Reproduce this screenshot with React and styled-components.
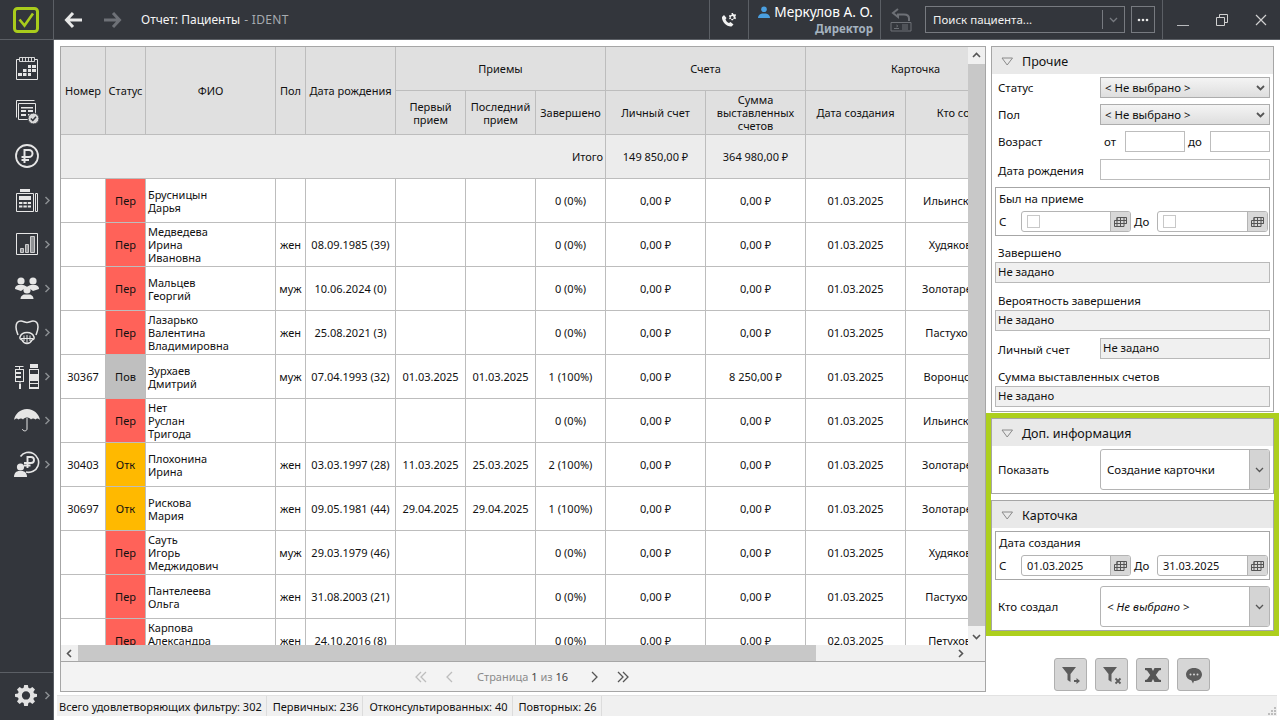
import React from 'react';
import styled, { createGlobalStyle } from 'styled-components';

const Global = createGlobalStyle`
  html, body { margin: 0; padding: 0; background: #fff; }
  body { font-family: "Noto Sans", "Open Sans", "DejaVu Sans", sans-serif; font-size: 11.5px; color: #111; }
  * { box-sizing: border-box; }
`;

const Page = styled.div`
  width: 1280px;
  height: 720px;
  overflow: hidden;
  display: flex;
  flex-direction: column;
  background: #fff;
`;

/* top bar */
const TopBar = styled.header`
  height: 40px;
  flex: none;
  display: flex;
  align-items: stretch;
  background: #33363c;
  border-bottom: 1px solid #5b5f65;
  color: #fff;
`;
const LogoCell = styled.div`
  width: 54px;
  flex: none;
  display: flex;
  align-items: center;
  justify-content: center;
  border-right: 1px solid #5b5f65;
  padding-right: 1px;
`;
const NavArrows = styled.div`
  display: flex;
  align-items: center;
  gap: 22px;
  padding-left: 10px;
`;
const Title = styled.div`
  margin-left: 19px;
  font-size: 12px;
  align-self: center;
  white-space: nowrap;
  color: #f4f4f4;
  span { color: #a7abb0; letter-spacing: .3px; margin-left: 1px; }
`;
const TopRight = styled.div`
  margin-left: auto;
  display: flex;
  align-items: stretch;
`;
const TopCell = styled.div`
  display: flex;
  align-items: center;
  justify-content: center;
  width: ${p => p.$w}px;
  border-left: ${p => (p.$line ? '1px solid #5b5f65' : 'none')};
`;
const UserCell = styled.div`
  width: 133px;
  border-left: 1px solid #5b5f65;
  border-right: 1px solid #5b5f65;
  display: flex;
  flex-direction: column;
  align-items: flex-end;
  padding: 2px 7px 0 0;
`;
const UserName = styled.div`
  display: flex;
  align-items: center;
  gap: 4px;
  font-size: 13.7px;
  line-height: 19px;
  white-space: nowrap;
`;
const UserRole = styled.div`
  font-size: 11.5px;
  font-weight: 700;
  line-height: 15px;
  color: #a4b2bf;
`;
const SearchBox = styled.div`
  width: 200px;
  height: 27px;
  align-self: center;
  margin-left: 4px;
  border: 1px solid #777a80;
  display: flex;
  align-items: center;
  font-size: 11.5px;
  padding-left: 7px;
  color: #f1f1f1;
`;
const SearchText = styled.span`
  flex: 1;
`;
const SearchArrow = styled.span`
  width: 22px;
  height: 19px;
  border-left: 1px solid #777a80;
  display: flex;
  align-items: center;
  justify-content: center;
`;
const MoreButton = styled.div`
  width: 24px;
  height: 27px;
  align-self: center;
  margin: 0 7px 0 6px;
  border: 1px solid #777a80;
  display: flex;
  align-items: center;
  justify-content: center;
`;
const WindowButtons = styled.div`
  width: 118px;
  border-left: 1px solid #5b5f65;
  display: flex;
  align-items: center;
  justify-content: space-between;
  padding: 0 13px 0 14px;
`;

/* body */
const Body = styled.div`
  flex: 1;
  display: flex;
  min-height: 0;
`;
const Sidebar = styled.nav`
  width: 54px;
  flex: none;
  background: #33363c;
  border-right: 1px solid #5b5f65;
  display: flex;
  flex-direction: column;
  padding-top: 6px;
`;
const SideItem = styled.div`
  height: 44px;
  flex: none;
  display: flex;
  align-items: center;
  position: relative;
  padding-left: 14px;
`;
const SideChevron = styled.svg`
  position: absolute;
  left: 44px;
  top: 18px;
`;
const SideFoot = styled.div`
  margin-top: auto;
  border-top: 1px solid #5b5f65;
  height: 48px;
  display: flex;
  align-items: center;
  position: relative;
  padding: 0 0 3px 15px;
`;
const Content = styled.main`
  flex: 1;
  min-width: 0;
  display: flex;
  flex-direction: column;
`;
const Workspace = styled.div`
  height: 652px;
  flex: none;
  display: flex;
  padding: 6px 0 0 6px;
`;

/* table panel */
const TablePanel = styled.section`
  width: 926px;
  height: 646px;
  flex: none;
  border: 1px solid #a6a6a6;
  display: flex;
  flex-direction: column;
  background: #fff;
`;
const TableArea = styled.div`
  height: 598px;
  flex: none;
  display: flex;
`;
const Viewport = styled.div`
  width: 907px;
  flex: none;
  overflow: hidden;
`;
const Grid = styled.table`
  table-layout: fixed;
  width: 965px;
  border-collapse: separate;
  border-spacing: 0;
  font-size: 11px;
  line-height: 13px;
`;
const Col = styled.col`
  width: ${p => p.$w}px;
`;
const Th = styled.th`
  height: 44px;
  background: #e0e0e0;
  font-weight: 400;
  text-align: center;
  padding: 0 2px;
  border-right: 1px solid #bdbdbd;
  border-bottom: 1px solid #bdbdbd;
  overflow: hidden;
  white-space: ${p => (p.$wrap ? 'normal' : 'nowrap')};
`;
const TotalCell = styled.td`
  height: 44px;
  background: #ececec;
  text-align: ${p => (p.$right ? 'right' : 'center')};
  padding: 0 2px;
  border-right: 1px solid #bdbdbd;
  border-bottom: 1px solid #bdbdbd;
`;
const Td = styled.td`
  height: 44px;
  padding: 0 2px;
  text-align: center;
  white-space: nowrap;
  overflow: hidden;
  border-right: 1px solid #bdbdbd;
  border-bottom: 1px solid #bdbdbd;
`;
const StatusTd = styled(Td)`
  background: ${p => p.$color};
`;
const NameTd = styled(Td)`
  text-align: left;
  white-space: pre-line;
`;
const VScroll = styled.div`
  width: 17px;
  flex: none;
  background: #f0f0f0;
  display: flex;
  flex-direction: column;
  align-items: center;
`;
const VArrow = styled.div`
  height: 17px;
  flex: none;
  display: flex;
  align-items: center;
  justify-content: center;
`;
const VTrack = styled.div`
  flex: 1;
  width: 17px;
`;
const VThumb = styled.div`
  height: 562px;
  background: #c8c8c8;
`;
const HScroll = styled.div`
  height: 16px;
  flex: none;
  background: #f0f0f0;
  display: flex;
  align-items: center;
  padding-right: 16px;
`;
const HArrow = styled.div`
  width: 17px;
  height: 16px;
  flex: none;
  display: flex;
  align-items: center;
  justify-content: center;
`;
const HTrack = styled.div`
  flex: 1;
  height: 16px;
`;
const HThumb = styled.div`
  width: 738px;
  height: 16px;
  background: #c8c8c8;
`;
const Pager = styled.div`
  flex: 1;
  border-top: 1px solid #a6a6a6;
  background: #f3f3f3;
  display: flex;
  align-items: center;
  padding-left: 353px;
`;
const PagerIcon = styled.svg`
  flex: none;
  margin-left: ${p => p.$ml || 0}px;
`;
const PagerText = styled.div`
  margin-left: 23px;
  font-size: 11px;
  color: #8b8b8b;
  white-space: nowrap;
  b { font-weight: 400; color: #444; }
`;

/* filter panel */
const FilterColumn = styled.aside`
  width: 293px;
  flex: none;
  display: flex;
  flex-direction: column;
`;
const SectionFrame = styled.div`
  margin: ${p => p.$m || '0'};
  width: 283px;
  height: ${p => p.$h}px;
  flex: none;
  border: 1px solid #a6a6a6;
  background: #fff;
`;
const SectionHead = styled.div`
  height: 27px;
  background: #e9e9e9;
  display: flex;
  align-items: center;
  gap: 8px;
  padding: 1px 0 0 9px;
  font-size: 12.5px;
`;
const Highlight = styled.div`
  border: 5px solid #adcf1d;
  width: 293px;
  height: 223px;
  flex: none;
  margin-top: 1px;
  display: flex;
  flex-direction: column;
  gap: 6px;
`;
const SectionBody = styled.div`
  padding: 3px 3px 0 3px;
  display: flex;
  flex-direction: column;
`;
const FieldRow = styled.div`
  height: ${p => p.$h || 21}px;
  margin-top: ${p => p.$mt || 0}px;
  display: flex;
  align-items: center;
  flex: none;
`;
const Label = styled.div`
  width: 105px;
  flex: none;
  padding: ${p => p.$pt || 0}px 0 0 3px;
  font-size: 11.5px;
  white-space: nowrap;
`;
const Small = styled.span`
  font-size: 11.5px;
  padding-left: ${p => p.$pl}px;
  width: 25px;
  flex: none;
`;
const NativeSelect = styled.div`
  flex: 1;
  height: 21px;
  border: 1px solid #adadad;
  background: linear-gradient(#f4f4f4, #dedede);
  display: flex;
  align-items: center;
  justify-content: space-between;
  padding: 0 4px;
  font-size: 11.4px;
`;
const Input = styled.div`
  width: ${p => (p.$w ? `${p.$w}px` : 'auto')};
  flex: ${p => (p.$w ? 'none' : '1')};
  height: 21px;
  border: 1px solid #bdbdbd;
  background: #fff;
`;
const DateBox = styled.div`
  border: 1px solid #a6a6a6;
  height: 49px;
  flex: none;
  margin-top: ${p => p.$mt || 0}px;
  padding: 2px 1px 0 3px;
`;
const DateTitle = styled.div`
  height: 21px;
  line-height: 18px;
  font-size: 11.5px;
`;
const DateRow = styled.div`
  display: flex;
  align-items: center;
  height: 21px;
`;
const DatePrefix = styled.span`
  width: 22px;
  flex: none;
  font-size: 11.5px;
`;
const DateTo = styled.span`
  width: 26px;
  flex: none;
  padding-left: 3px;
  font-size: 11.5px;
`;
const DateField = styled.div`
  width: ${p => p.$w}px;
  flex: none;
  height: 21px;
  border: 1px solid #b4b4b4;
  border-radius: 3px;
  display: flex;
  align-items: center;
  overflow: hidden;
  font-size: 11px;
`;
const DateValue = styled.div`
  flex: 1;
  padding-left: 5px;
  display: flex;
  align-items: center;
`;
const EmptyCheck = styled.div`
  width: 13px;
  height: 13px;
  border: 1px solid #c8c8c8;
`;
const CalButton = styled.div`
  width: 20px;
  height: 100%;
  flex: none;
  background: #d8d8d8;
  border-left: 1px solid #b4b4b4;
  display: flex;
  align-items: center;
  justify-content: center;
`;
const StackLabel = styled.div`
  height: 18px;
  margin-top: ${p => p.$mt || 0}px;
  padding: 0 0 2px 3px;
  display: flex;
  align-items: center;
  flex: none;
  font-size: 11.5px;
`;
const ReadOnly = styled.div`
  flex: ${p => (p.$grow ? '1' : 'none')};
  height: 21px;
  border: 1px solid #b9b9b9;
  background: #f0f0f0;
  padding-left: 2px;
  font-size: 11.3px;
  line-height: 18px;
`;
const BigSelect = styled.div`
  flex: 1;
  height: 41px;
  border: 1px solid #b4b4b4;
  border-radius: 3px;
  display: flex;
  align-items: center;
  overflow: hidden;
  font-size: 11.5px;
`;
const BigValue = styled.div`
  flex: 1;
  padding-left: 6px;
  font-style: ${p => (p.$it ? 'italic' : 'normal')};
`;
const BigArrow = styled.div`
  width: 20px;
  height: 100%;
  background: #d4d4d4;
  border-left: 1px solid #b4b4b4;
  display: flex;
  align-items: center;
  justify-content: center;
`;
const ActionBar = styled.div`
  display: flex;
  gap: 8px;
  margin: 22px 0 0 68px;
`;
const ActionButton = styled.button`
  width: 33px;
  height: 33px;
  padding: 0;
  background: #d6d6d6;
  border: 1px solid #b0b0b0;
  border-radius: 3px;
  display: flex;
  align-items: center;
  justify-content: center;
  color: #555;
`;

/* status bar */
const StatusBar = styled.footer`
  height: 21px;
  flex: none;
  margin: 3px 3px 0 3px;
  background: #f0f0f0;
  border-top: 1px solid #e2e2e2;
  display: flex;
  align-items: stretch;
  font-size: 11px;
  position: relative;
`;
const StatusItem = styled.div`
  padding: 0 4px 0 ${p => (p.$first ? 2 : 6)}px;
  line-height: 21px;
  border-right: 1px solid #dcdcdc;
  white-space: nowrap;
`;
const Grip = styled.svg`
  position: absolute;
  right: 1px;
  bottom: 1px;
`;

const Chev = ({ d = 'r', c = '#555', s = 1.6, w = 9, h = 9 }) => {
  const paths = {
    r: 'M3 1l3.5 3.5L3 8',
    l: 'M6 1L2.5 4.5 6 8',
    u: 'M1 6l3.5-3.5L8 6',
    d: 'M1 3l3.5 3.5L8 3',
  };
  return (
    <svg width={w} height={h} viewBox="0 0 9 9" fill="none">
      <path d={paths[d]} stroke={c} strokeWidth={s} />
    </svg>
  );
};

const Tri = () => (
  <svg width="13" height="9" viewBox="0 0 13 9" fill="none">
    <path d="M1 1h10.5L6.2 8z" stroke="#8a8a8a" strokeWidth="1" />
  </svg>
);

const Cal = () => (
  <svg width="13" height="10" viewBox="0 0 13 10" fill="none" stroke="#555" strokeWidth="1">
    <path d="M3 .5h9.5v6H10v3H.5v-6H3zM.5 6.5h12M3 .5v9M6.5.5v9M10 .5v6M3 3.5h9.5" />
  </svg>
);

const LogoIcon = () => (
  <svg width="26" height="26" viewBox="0 0 26 26">
    <rect x="1.5" y="1.5" width="23" height="23" rx="3" fill="#33363c" stroke="#a9cc1c" strokeWidth="3" />
    <path d="M6.5 12.5l5 6 8.5-12" fill="none" stroke="#a9cc1c" strokeWidth="2.6" />
  </svg>
);

const icon = { width: 26, height: 26, viewBox: '0 0 26 26' };

const CalendarIcon = () => (
  <svg {...icon} fill="none" stroke="#e6e6e6">
    <path d="M2.5 4.5h21v20h-21z" />
    <path d="M5.500 2.500h15v4h-15zM8.500 2.500v4M11.500 2.500v4M14.500 2.500v4M17.500 2.500v4" strokeWidth=".9" fill="#33363c" />
    <path d="M14 10h3v3h-3zM18 10h4v3h-4zM9 14h3.500v3H9zM14 14h3v3h-3zM18 14h4v3h-4zM4 18h4v3H4zM9 18h3.500v3H9zM14 18h3v3h-3z" fill="#e6e6e6" stroke="none" />
  </svg>
);
const ListCheckIcon = () => (
  <svg {...icon} fill="none" stroke="#e6e6e6">
    <path d="M2.500 1.500h18M2.500 1.500v17M4.500 4.500h17v16h-17z" />
    <path d="M7 8h12v1.600H7zM7 11h5v2H7zM14 11h5v2h-5zM7 15h5v2H7zM14 15h3v2h-3z" fill="#e6e6e6" stroke="none" />
    <circle cx="19.500" cy="19.500" r="5.500" fill="#d8d8d8" stroke="#33363c" />
    <path d="M16.800 19.500l2 2 3.200-3.800" stroke="#33363c" strokeWidth="1.500" />
  </svg>
);
const RubleIcon = () => (
  <svg {...icon} fill="none" stroke="#e6e6e6" strokeWidth="1.800">
    <circle cx="13" cy="13" r="11" />
    <path d="M10.500 20V7h4.500a3.500 3.500 0 0 1 0 7H7.500M7.500 17H15" strokeWidth="2" />
  </svg>
);
const RegisterIcon = () => (
  <svg {...icon} fill="none" stroke="#e6e6e6">
    <path d="M2.500 6.500h17v18h-17zM21.500 6.500h2v18h-2z" />
    <path d="M6 2h10v3H6z" fill="#e6e6e6" stroke="none" />
    <path d="M5 9h12v4H5zM5 15h3.400v2H5zM9.400 15h3.400v2H9.400zM13.800 15H17v2h-3.200zM5 18.500h3.400v2H5zM9.400 18.500h3.400v2H9.400zM13.800 18.500H17v2h-3.200z" fill="#e6e6e6" stroke="none" />
  </svg>
);
const ChartIcon = () => (
  <svg {...icon} fill="none" stroke="#e6e6e6">
    <path d="M2.500 2.500h21v21h-21z" />
    <path d="M6.500 17.500h3v4h-3zM11.500 13.500h3v8h-3zM16.500 5.500h4v16h-4z" fill="#8f9194" stroke="#e6e6e6" strokeWidth=".8" />
  </svg>
);
const PeopleIcon = () => (
  <svg {...icon} fill="#e6e6e6">
    <circle cx="7" cy="6" r="3.600" />
    <path d="M1 14c0-3 2.500-4 4-4h4c1.500 0 3 1 3.500 2L7 16z" />
    <circle cx="19" cy="6" r="3.600" />
    <path d="M25 14c0-3-2.500-4-4-4h-4c-1.500 0-3 1-3.500 2l5.500 4z" />
    <circle cx="13" cy="15" r="3.600" />
    <path d="M6.500 24c0-3 2.500-4.500 4-4.500h5c1.500 0 4 1.500 4 4.500z" />
  </svg>
);
const ToothIcon = () => (
  <svg {...icon} fill="none" stroke="#e6e6e6" strokeWidth="1.500">
    <path d="M7 2c2 0 4 1.500 6 1.500S17 2 19 2c3.500 0 5 3 5 6 0 3-1 5-2 8M7 2C3.500 2 2 5 2 8c0 3 1 5 2 8" />
    <path d="M6 18c1-3 4-4.500 7-4.500s6 1.500 7 4.500c.5 1.500-.5 2.500-2 3-1 2-3 3.500-5 3.500S9 23 8 21c-1.500-.5-2.500-1.500-2-3z" />
    <path d="M7 19.500h12M13 16v8M10 16.500v5.500M16 16.500v5.500" strokeWidth="1" />
  </svg>
);
const MedIcon = () => (
  <svg {...icon} fill="#e6e6e6">
    <path d="M1 3h8.500v1H6v2h4v13H6.500v2H7v5H5v-5h.500v-2H1V6h4V4H1zm1 4v2h5v2H2v2h5v2H2v3h7V7z" />
    <path d="M16 1h8v4h-8zM15 6h10v20H15zm1 1v17h8V7z" />
    <path d="M15 11h10v7H15z" />
    <path d="M16 20h8v1h-8z" />
  </svg>
);
const UmbrellaIcon = () => (
  <svg {...icon}>
    <path d="M13 2C6 2 1 7 0 13c2-2 3-2 4.500-.5C6 11 8 11 9 12.500c1-1.500 3-2 4-2s3 .5 4 2c1-1.500 3-1.500 4.500 0C23 11 24 11 26 13 25 7 20 2 13 2z" fill="#e6e6e6" />
    <path d="M13 11v11c0 2.500-4.500 2.500-4.500 0" fill="none" stroke="#e6e6e6" strokeWidth="1" />
  </svg>
);
const UserRubleIcon = () => (
  <svg {...icon} fill="none" stroke="#e6e6e6">
    <path d="M6.500 5.500A10 10 0 1 1 12 21" strokeWidth="1.600" />
    <path d="M13.500 17V6H17a3 3 0 0 1 0 6h-7M10 14.500h6.500" strokeWidth="1.900" />
    <circle cx="6.500" cy="16" r="3.600" fill="#e6e6e6" stroke="none" />
    <path d="M0 26c0-4 2.500-6 5-6h3c2.500 0 5 2 5 6z" fill="#e6e6e6" stroke="none" />
  </svg>
);
const GearIcon = () => (
  <svg width="22" height="22" viewBox="0 0 24 24" fill="#e2e2e2" fillRule="evenodd">
    <path d="M10 1h4l.600 3.200 1.800.8L19 3.200 21.800 6 20 8.600l.8 1.800L24 11v3l-3.200.6-.8 1.800 1.800 2.600-2.800 2.800-2.600-1.800-1.800.8L14 24h-4l-.6-3.200-1.800-.8L5 21.800 2.200 19 4 16.400l-.8-1.800L0 14v-3l3.200-.6.8-1.800L2.200 6 5 3.200l2.600 1.800 1.800-.8zM12 8a4.500 4.500 0 1 0 0 9 4.500 4.500 0 0 0 0-9z" />
  </svg>
);

const sideIcons = [CalendarIcon, ListCheckIcon, RubleIcon, RegisterIcon, ChartIcon, PeopleIcon, ToothIcon, MedIcon, UmbrellaIcon, UserRubleIcon];
const withChevron = [false, false, false, true, true, true, true, true, true, true];

const STATUS = { p: ['Пер', '#ff6259'], o: ['Отк', '#ffb900'], v: ['Пов', '#bfbfbf'] };

const rows = [
  ['', 'p', 'Брусницын\nДарья', '', '', '', '', '0 (0%)', '0,00 ₽', '0,00 ₽', '01.03.2025', 'Ильинская И. С.'],
  ['', 'p', 'Медведева\nИрина\nИвановна', 'жен', '08.09.1985 (39)', '', '', '0 (0%)', '0,00 ₽', '0,00 ₽', '01.03.2025', 'Худякова Е. С.'],
  ['', 'p', 'Мальцев\nГеоргий', 'муж', '10.06.2024 (0)', '', '', '0 (0%)', '0,00 ₽', '0,00 ₽', '01.03.2025', 'Золотарева Е. А.'],
  ['', 'p', 'Лазарько\nВалентина\nВладимировна', 'жен', '25.08.2021 (3)', '', '', '0 (0%)', '0,00 ₽', '0,00 ₽', '01.03.2025', 'Пастухова А. В.'],
  ['30367', 'v', 'Зурхаев\nДмитрий', 'муж', '07.04.1993 (32)', '01.03.2025', '01.03.2025', '1 (100%)', '0,00 ₽', '8 250,00 ₽', '01.03.2025', 'Воронцова Е. А.'],
  ['', 'p', 'Нет\nРуслан\nТригода', '', '', '', '', '0 (0%)', '0,00 ₽', '0,00 ₽', '01.03.2025', 'Ильинская И. С.'],
  ['30403', 'o', 'Плохонина\nИрина', 'жен', '03.03.1997 (28)', '11.03.2025', '25.03.2025', '2 (100%)', '0,00 ₽', '0,00 ₽', '01.03.2025', 'Золотарева Е. А.'],
  ['30697', 'o', 'Рискова\nМария', 'жен', '09.05.1981 (44)', '29.04.2025', '29.04.2025', '1 (100%)', '0,00 ₽', '0,00 ₽', '01.03.2025', 'Золотарева Е. А.'],
  ['', 'p', 'Сауть\nИгорь\nМеджидович', 'муж', '29.03.1979 (46)', '', '', '0 (0%)', '0,00 ₽', '0,00 ₽', '01.03.2025', 'Худякова Е. С.'],
  ['', 'p', 'Пантелеева\nОльга', 'жен', '31.08.2003 (21)', '', '', '0 (0%)', '0,00 ₽', '0,00 ₽', '01.03.2025', 'Пастухова А. В.'],
  ['', 'p', 'Карпова\nАлександра\nЮрьевна', 'жен', '24.10.2016 (8)', '', '', '0 (0%)', '0,00 ₽', '0,00 ₽', '02.03.2025', 'Петухова А. В.'],
];

const colWidths = [45, 40, 130, 30, 90, 70, 70, 70, 100, 100, 100, 120];

const DatePair = ({ from, to }) => (
  <DateRow>
    <DatePrefix>С</DatePrefix>
    <DateField $w={110}>
      <DateValue>{from || <EmptyCheck />}</DateValue>
      <CalButton><Cal /></CalButton>
    </DateField>
    <DateTo>До</DateTo>
    <DateField $w={111}>
      <DateValue>{to || <EmptyCheck />}</DateValue>
      <CalButton><Cal /></CalButton>
    </DateField>
  </DateRow>
);

const Chevron = () => (
  <SideChevron width="8" height="9" viewBox="0 0 8 9" fill="none">
    <path d="M1.500 1l3.500 3.500L1.500 8" stroke="#8a8d91" strokeWidth="1.500" />
  </SideChevron>
);

export default function App() {
  return (
    <Page>
      <Global />
      <TopBar>
        <LogoCell><LogoIcon /></LogoCell>
        <NavArrows>
          <svg width="18" height="18" viewBox="0 0 18 18" fill="none" stroke="#e8e8e8" strokeWidth="3">
            <path d="M9 2L2.500 9 9 16M3 9h15" />
          </svg>
          <svg width="18" height="18" viewBox="0 0 18 18" fill="none" stroke="#6e7177" strokeWidth="3">
            <path d="M9 2l6.500 7L9 16M15 9H0" />
          </svg>
        </NavArrows>
        <Title>Отчет: Пациенты <span>- IDENT</span></Title>
        <TopRight>
          <TopCell $w={39} $line>
            <svg width="16" height="16" viewBox="0 0 16 16" fill="#f2f2f2">
              <path d="M1 5l2-2 2.500 3L4.500 7.500c.5 1.500 2 3 3.500 3.500L9.500 10l3 2.500-2 2C6 15 .5 9.500 1 5z" />
              <path fillRule="evenodd" d="M10.500 1l1.500 0 .3 1 1 .5 1-.4.8 1.200-.7.8v1.100l.7.800-.8 1.200-1-.4-1 .5-.3 1h-1.500l-.3-1-1-.5-1 .4L7.900 6.800l.7-.8V4.900l-.7-.8.800-1.200 1 .4 1-.5zM11.200 4a1.500 1.500 0 1 0 0 3 1.500 1.500 0 0 0 0-3z" />
            </svg>
          </TopCell>
          <UserCell>
            <UserName>
              <svg width="12" height="12" viewBox="0 0 12 12" fill="#4a9fe0">
                <circle cx="6" cy="3.200" r="2.800" />
                <path d="M0 12c0-3 2.500-4 4-4.500h4c1.500.5 4 1.500 4 4.500z" />
              </svg>
              Меркулов А. О.
            </UserName>
            <UserRole>Директор</UserRole>
          </UserCell>
          <TopCell $w={40}>
            <svg width="22" height="24" viewBox="0 0 22 24" fill="none" stroke="#6e7177" strokeWidth="1.500">
              <path d="M8 1L3 5l5 4V6.500h6c3 0 5 1.500 5 4V13" strokeWidth="2" />
              <path d="M1 14.500h20v8.500H1z" strokeWidth="1" />
              <path d="M4 20.500h5M12 17h6M12 19h6M12 21h6M6.500 19a1 1 0 1 0 0-2" strokeWidth="1" />
            </svg>
          </TopCell>
          <SearchBox>
            <SearchText>Поиск пациента...</SearchText>
            <SearchArrow><Chev d="d" c="#777a80" s={1.3} /></SearchArrow>
          </SearchBox>
          <MoreButton>
            <svg width="12" height="4" viewBox="0 0 12 4" fill="#e8e8e8">
              <circle cx="2" cy="2" r="1.300" /><circle cx="6" cy="2" r="1.300" /><circle cx="10" cy="2" r="1.300" />
            </svg>
          </MoreButton>
          <WindowButtons>
            <svg width="12" height="12" viewBox="0 0 12 12" fill="none" stroke="#b8babd"><path d="M0 11.500h12" /></svg>
            <svg width="12" height="12" viewBox="0 0 12 12" fill="none" stroke="#d0d0d0"><path d="M.5 3.500h8v8h-8zM3.500 3.500v-3h8v8h-3" /></svg>
            <svg width="12" height="12" viewBox="0 0 12 12" fill="none" stroke="#d0d0d0" strokeWidth="1.200"><path d="M1 1l10 10M11 1L1 11" /></svg>
          </WindowButtons>
        </TopRight>
      </TopBar>
      <Body>
        <Sidebar>
          {sideIcons.map((Icon, i) => (
            <SideItem key={i}>
              <Icon />
              {withChevron[i] && <Chevron />}
            </SideItem>
          ))}
          <SideFoot>
            <GearIcon />
            <Chevron />
          </SideFoot>
        </Sidebar>
        <Content>
          <Workspace>
            <TablePanel>
              <TableArea>
                <Viewport>
                  <Grid>
                    <colgroup>
                      {colWidths.map((w, i) => <Col key={i} $w={w} />)}
                    </colgroup>
                    <thead>
                      <tr>
                        <Th rowSpan={2}>Номер</Th>
                        <Th rowSpan={2}>Статус</Th>
                        <Th rowSpan={2}>ФИО</Th>
                        <Th rowSpan={2}>Пол</Th>
                        <Th rowSpan={2}>Дата рождения</Th>
                        <Th colSpan={3}>Приемы</Th>
                        <Th colSpan={2}>Счета</Th>
                        <Th colSpan={2}>Карточка</Th>
                      </tr>
                      <tr>
                        <Th $wrap>Первый прием</Th>
                        <Th $wrap>Последний прием</Th>
                        <Th>Завершено</Th>
                        <Th>Личный счет</Th>
                        <Th $wrap>Сумма выставленных счетов</Th>
                        <Th>Дата создания</Th>
                        <Th>Кто создал</Th>
                      </tr>
                      <tr>
                        <TotalCell colSpan={8} $right>Итого</TotalCell>
                        <TotalCell>149 850,00 ₽</TotalCell>
                        <TotalCell>364 980,00 ₽</TotalCell>
                        <TotalCell />
                        <TotalCell />
                      </tr>
                    </thead>
                    <tbody>
                      {rows.map((r, i) => (
                        <tr key={i}>
                          <Td>{r[0]}</Td>
                          <StatusTd $color={STATUS[r[1]][1]}>{STATUS[r[1]][0]}</StatusTd>
                          <NameTd>{r[2]}</NameTd>
                          {r.slice(3).map((v, j) => <Td key={j}>{v}</Td>)}
                        </tr>
                      ))}
                    </tbody>
                  </Grid>
                </Viewport>
                <VScroll>
                  <VArrow><Chev d="u" /></VArrow>
                  <VTrack><VThumb /></VTrack>
                  <VArrow><Chev d="d" /></VArrow>
                </VScroll>
              </TableArea>
              <HScroll>
                <HArrow><Chev d="l" /></HArrow>
                <HTrack><HThumb /></HTrack>
                <HArrow><Chev d="r" /></HArrow>
              </HScroll>
              <Pager>
                <PagerIcon width="14" height="12" viewBox="0 0 14 12" fill="none" stroke="#bdbdbd" strokeWidth="1.300"><path d="M7 1L2 6l5 5M12 1L7 6l5 5" /></PagerIcon>
                <PagerIcon $ml={17} width="9" height="12" viewBox="0 0 9 12" fill="none" stroke="#bdbdbd" strokeWidth="1.300"><path d="M7 1L2 6l5 5" /></PagerIcon>
                <PagerText>Страница <b>1</b> из <b>16</b></PagerText>
                <PagerIcon $ml={22} width="9" height="12" viewBox="0 0 9 12" fill="none" stroke="#555" strokeWidth="1.300"><path d="M2 1l5 5-5 5" /></PagerIcon>
                <PagerIcon $ml={17} width="14" height="12" viewBox="0 0 14 12" fill="none" stroke="#555" strokeWidth="1.300"><path d="M2 1l5 5-5 5M7 1l5 5-5 5" /></PagerIcon>
              </Pager>
            </TablePanel>
            <FilterColumn>
              <SectionFrame $m="0 0 0 5px" $h={366}>
                <SectionHead><Tri />Прочие</SectionHead>
                <SectionBody>
                  <FieldRow><Label>Статус</Label><NativeSelect>&lt; Не выбрано &gt;<Chev d="d" c="#555" s={1.8} /></NativeSelect></FieldRow>
                  <FieldRow $mt={6}><Label>Пол</Label><NativeSelect>&lt; Не выбрано &gt;<Chev d="d" c="#555" s={1.8} /></NativeSelect></FieldRow>
                  <FieldRow $mt={6}>
                    <Label>Возраст</Label>
                    <Small $pl={4}>от</Small>
                    <Input $w={60} />
                    <Small $pl={3}>до</Small>
                    <Input />
                  </FieldRow>
                  <FieldRow $mt={7}><Label $pt={2}>Дата рождения</Label><Input /></FieldRow>
                  <DateBox $mt={7}>
                    <DateTitle>Был на приеме</DateTitle>
                    <DatePair />
                  </DateBox>
                  <StackLabel $mt={8}>Завершено</StackLabel>
                  <ReadOnly>Не задано</ReadOnly>
                  <StackLabel $mt={9}>Вероятность завершения</StackLabel>
                  <ReadOnly>Не задано</ReadOnly>
                  <FieldRow $mt={7}>
                    <Label $pt={1}>Личный счет</Label>
                    <ReadOnly $grow>Не задано</ReadOnly>
                  </FieldRow>
                  <StackLabel $mt={9}>Сумма выставленных счетов</StackLabel>
                  <ReadOnly>Не задано</ReadOnly>
                </SectionBody>
              </SectionFrame>
              <Highlight>
                <SectionFrame $h={76}>
                  <SectionHead><Tri />Доп. информация</SectionHead>
                  <SectionBody>
                    <FieldRow $h={41}>
                      <Label>Показать</Label>
                      <BigSelect>
                        <BigValue>Создание карточки</BigValue>
                        <BigArrow><Chev d="d" c="#555" s={1.3} /></BigArrow>
                      </BigSelect>
                    </FieldRow>
                  </SectionBody>
                </SectionFrame>
                <SectionFrame $h={131}>
                  <SectionHead><Tri />Карточка</SectionHead>
                  <SectionBody>
                    <DateBox>
                      <DateTitle>Дата создания</DateTitle>
                      <DatePair from="01.03.2025" to="31.03.2025" />
                    </DateBox>
                    <FieldRow $h={41} $mt={6}>
                      <Label>Кто создал</Label>
                      <BigSelect>
                        <BigValue $it>&lt; Не выбрано &gt;</BigValue>
                        <BigArrow><Chev d="d" c="#555" s={1.3} /></BigArrow>
                      </BigSelect>
                    </FieldRow>
                  </SectionBody>
                </SectionFrame>
              </Highlight>
              <ActionBar>
                <ActionButton>
                  <svg width="22" height="22" viewBox="0 0 22 22" fill="#5c5c5c"><path d="M2 3h14l-5.500 7v8l-3-2v-6z" /><path d="M14 16h2.500v-2l3.500 3-3.500 3v-2H14z" /></svg>
                </ActionButton>
                <ActionButton>
                  <svg width="22" height="22" viewBox="0 0 22 22" fill="#5c5c5c"><path d="M2 3h14l-5.500 7v8l-3-2v-6z" /><path d="M14.500 14.500l5 5M19.500 14.500l-5 5" stroke="#5c5c5c" strokeWidth="1.800" /></svg>
                </ActionButton>
                <ActionButton>
                  <svg width="20" height="20" viewBox="0 0 20 20" fill="#555"><path d="M2 3h6.500L10 6l1.500-3H18v2l-2 .5L12.800 10l3.200 4.500 2 .5v2h-6.500L10 14l-1.500 3H2v-2l2-.5L7.200 10 4 5.500 2 5z" /></svg>
                </ActionButton>
                <ActionButton>
                  <svg width="18" height="18" viewBox="0 0 18 18" fill="#5c5c5c"><path d="M9 2c4.500 0 8 2.700 8 6.500S13.500 15 9 15l-1 2.500L6.500 14.500C3 13.500 1 11.500 1 8.500 1 4.700 4.500 2 9 2z" /><circle cx="5.500" cy="8.500" r="1" fill="#d6d6d6" /><circle cx="9" cy="8.500" r="1" fill="#d6d6d6" /><circle cx="12.500" cy="8.500" r="1" fill="#d6d6d6" /></svg>
                </ActionButton>
              </ActionBar>
            </FilterColumn>
          </Workspace>
          <StatusBar>
            <StatusItem $first>Всего удовлетворяющих фильтру: 302</StatusItem>
            <StatusItem>Первичных: 236</StatusItem>
            <StatusItem>Отконсультированных: 40</StatusItem>
            <StatusItem>Повторных: 26</StatusItem>
            <Grip width="9" height="9" viewBox="0 0 9 9" fill="#bdbdbd">
              <path d="M7 1h2v2H7zM4 4h2v2H4zM7 4h2v2H7zM1 7h2v2H1zM4 7h2v2H4zM7 7h2v2H7z" />
            </Grip>
          </StatusBar>
        </Content>
      </Body>
    </Page>
  );
}
